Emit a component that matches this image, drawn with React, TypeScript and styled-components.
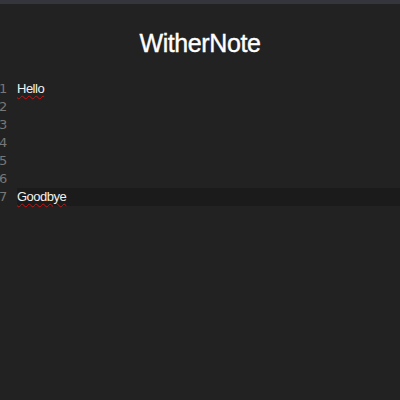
import React from 'react'
import styled, { createGlobalStyle } from 'styled-components'

const GlobalStyle = createGlobalStyle`
  html, body {
    margin: 0;
    padding: 0;
    background: #222222;
  }
  #root {
    height: 400px;
  }
`

const Page = styled.div`
  width: 400px;
  height: 400px;
  background: #222222;
  display: flex;
  flex-direction: column;
  overflow: hidden;
`

const TopBar = styled.div`
  height: 4px;
  background: #35363b;
`

const Title = styled.h1`
  margin: 0;
  padding-top: 23px;
  height: 56px;
  box-sizing: border-box;
  text-align: center;
  color: #ffffff;
  font-family: 'Liberation Sans', Arial, sans-serif;
  font-weight: normal;
  font-size: 25px;
  line-height: 32px;
  letter-spacing: -0.4px;
  -webkit-text-stroke: 0.4px #ffffff;
`

const Editor = styled.div`
  display: flex;
  flex-direction: column;
  padding-top: 20px;
`

const Line = styled.div`
  display: flex;
  height: 18px;
  align-items: center;
`

const Gutter = styled.div`
  width: 17px;
  flex: none;
  color: #777777;
  font-family: 'DejaVu Sans', sans-serif;
  font-size: 13px;
  line-height: 18px;
  text-indent: -1px;
`

const Content = styled.div<{ active?: boolean }>`
  flex: 1;
  height: 18px;
  line-height: 18px;
  background: ${(p) => (p.active ? '#1b1b1b' : 'transparent')};
  color: #f2f2f2;
  font-family: 'Liberation Sans', Arial, sans-serif;
  font-size: 13px;
  letter-spacing: -0.5px;
`

const Misspelled = styled.span`
  text-decoration: underline wavy #d01010;
  text-decoration-thickness: 1px;
  text-underline-offset: 2px;
`

const lines = ['Hello', '', '', '', '', '', 'Goodbye']

export default function App() {
  return (
    <Page>
      <GlobalStyle />
      <TopBar />
      <Title>WitherNote</Title>
      <Editor>
        {lines.map((text, i) => (
          <Line key={i}>
            <Gutter>{i + 1}</Gutter>
            <Content active={i === 6}>{text && <Misspelled>{text}</Misspelled>}</Content>
          </Line>
        ))}
      </Editor>
    </Page>
  )
}
